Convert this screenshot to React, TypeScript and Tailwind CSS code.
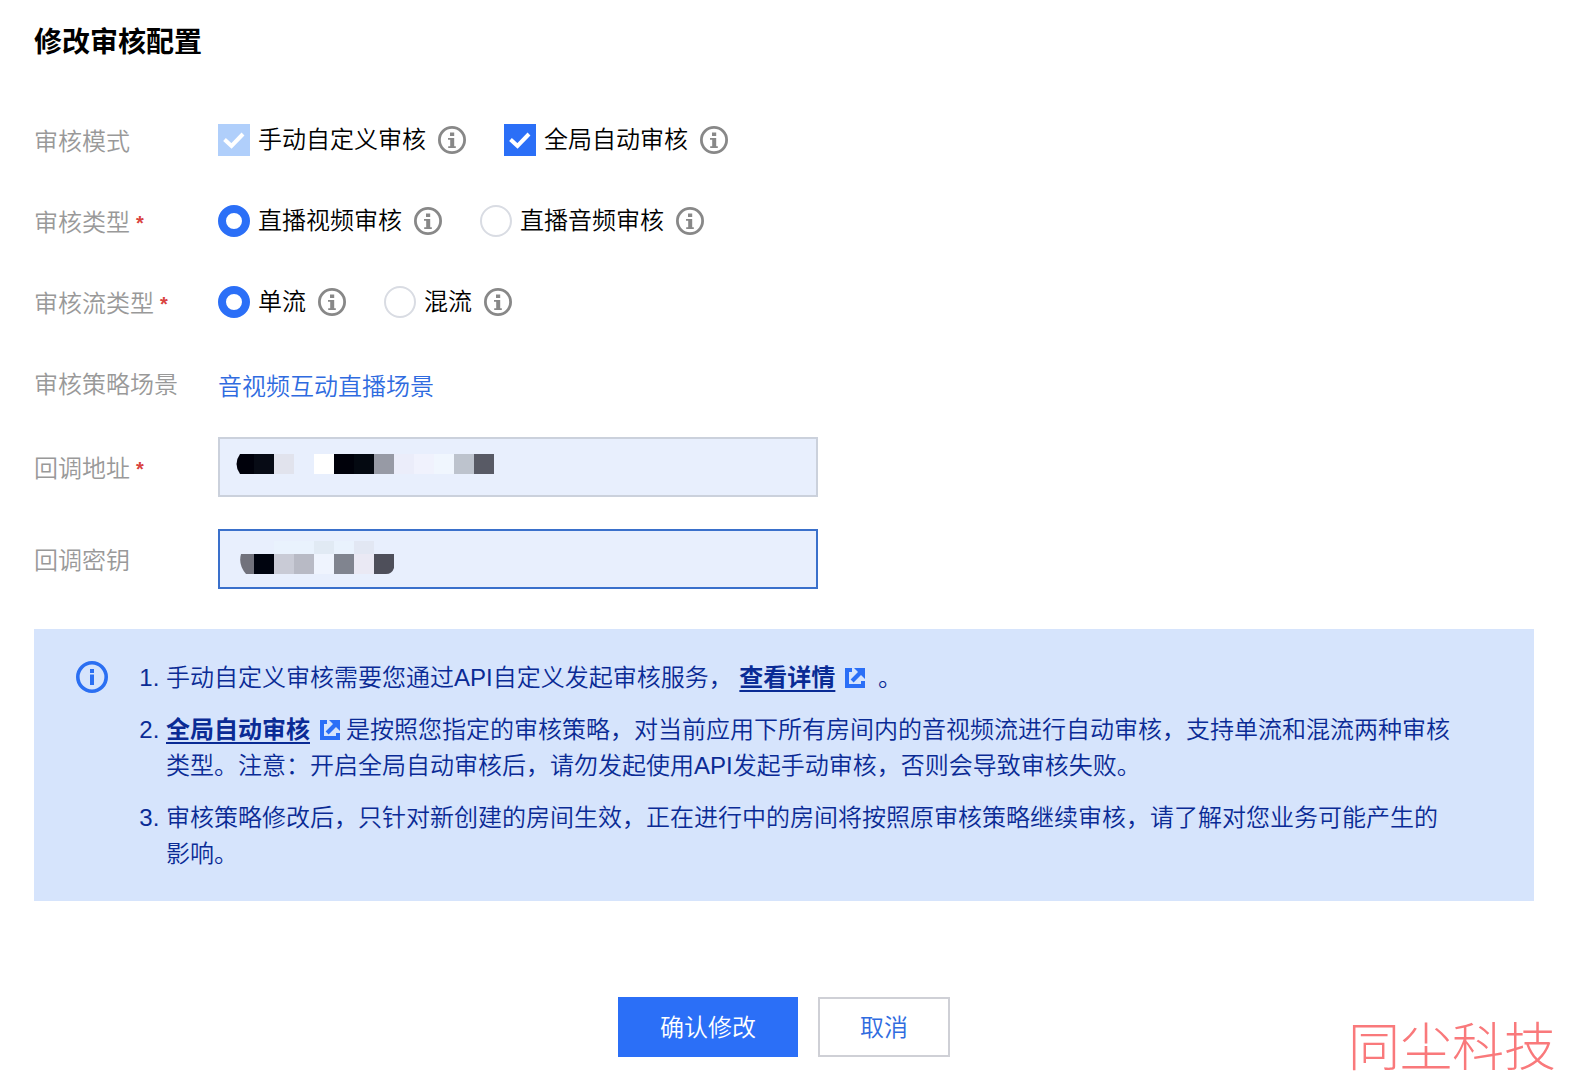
import { useState } from 'react';
import type { ReactNode } from 'react';

const InfoIcon = () => (
  <svg viewBox="0 0 28 28" className="w-7 h-7 shrink-0 text-[#888888]" aria-hidden="true">
    <circle cx="14" cy="14" r="12.6" fill="none" stroke="currentColor" strokeWidth="2.8" />
    <path d="M12 6.4h4.2v3.6H12zM10 12h6.2v8.2h1.6V22h-7.6v-1.8h2v-6.4H10z" fill="currentColor" />
  </svg>
);

const AlertIcon = () => (
  <svg viewBox="0 0 32 32" className="w-8 h-8 shrink-0 text-[#2b6ff2]" aria-hidden="true">
    <circle cx="16" cy="16" r="14.2" fill="none" stroke="currentColor" strokeWidth="3.6" />
    <path d="M14 8h4v4h-4zM14 13.4h4V24h-4z" fill="currentColor" />
  </svg>
);

const ExternalIcon = () => (
  <svg viewBox="0 0 20 20" className="inline-block w-5 h-5 ml-2.5 mr-1.5 align-[-2px] text-[#2b6ff7]" aria-hidden="true">
    <path d="M0 0h7v4H4v12h12v-3h4v7H0z" fill="currentColor" />
    <path d="M9 0h11v11l-4-4-7.4 7.4-3-3L13 4z" fill="currentColor" />
  </svg>
);

type ChoiceProps = {
  type: 'checkbox' | 'radio';
  name: string;
  label: string;
  checked: boolean;
  disabled?: boolean;
  onChange: () => void;
};

const Choice = ({ type, name, label, checked, disabled, onChange }: ChoiceProps) => (
  <div className="flex items-center gap-3">
    <label className="flex items-center gap-2">
      <span className="relative flex">
        <input
          type={type}
          name={name}
          checked={checked}
          disabled={disabled}
          onChange={onChange}
          className={
            type === 'checkbox'
              ? 'appearance-none w-8 h-8 border-2 border-[#cfd5de] checked:border-[#2b6ff7] checked:bg-[#2b6ff7] disabled:border-[#b0cffb] disabled:bg-[#b0cffb]'
              : 'appearance-none w-8 h-8 rounded-full border-2 border-[#d9dce3] checked:border-8 checked:border-[#2b6ff7]'
          }
        />
        {type === 'checkbox' && checked && (
          <svg viewBox="0 0 32 32" className="absolute inset-0 pointer-events-none" aria-hidden="true">
            <path d="M6.5 15.5l7 6.5L25 10" fill="none" stroke="#fff" strokeWidth="4" />
          </svg>
        )}
      </span>
      {label}
    </label>
    <InfoIcon />
  </div>
);

type RowProps = {
  label: string;
  required?: boolean;
  htmlFor?: string;
  alignTop?: boolean;
  children: ReactNode;
};

const Row = ({ label, required, htmlFor, alignTop, children }: RowProps) => {
  const Tag = htmlFor ? 'label' : 'span';
  return (
    <div className={alignTop ? 'flex items-start' : 'flex items-center'}>
      <Tag htmlFor={htmlFor} className="flex w-46 shrink-0 gap-1.5 pt-1 text-[#999999]">
        {label}
        {required && <span className="text-xl/8 font-bold text-[#d9443f]">*</span>}
      </Tag>
      {children}
    </div>
  );
};

const inputClass =
  'w-full h-15 px-4 border-2 border-[#cbd1dc] bg-[#e8effd] outline-none focus:border-[#3a70cb]';

const App = () => {
  const [auto, setAuto] = useState(true);
  const [media, setMedia] = useState('video');
  const [stream, setStream] = useState('single');

  return (
    <main className="relative min-h-screen bg-white pl-[34px] pr-10 pt-[22px] pb-7 text-2xl/8 font-[350] text-black font-['Liberation_Sans','Noto_Sans_CJK_SC',sans-serif]">
      <h1 className="text-[28px]/[42px] font-bold">修改审核配置</h1>

      <form className="mt-[58px]" onSubmit={(e) => e.preventDefault()}>
        <div className="flex flex-col gap-[45px]">
          <Row label="审核模式">
            <div className="flex gap-[38px]">
              <Choice type="checkbox" name="manual" label="手动自定义审核" checked disabled onChange={() => {}} />
              <Choice type="checkbox" name="auto" label="全局自动审核" checked={auto} onChange={() => setAuto(!auto)} />
            </div>
          </Row>
          <Row label="审核类型" required>
            <div className="flex gap-[38px]">
              <Choice type="radio" name="media" label="直播视频审核" checked={media === 'video'} onChange={() => setMedia('video')} />
              <Choice type="radio" name="media" label="直播音频审核" checked={media === 'audio'} onChange={() => setMedia('audio')} />
            </div>
          </Row>
          <Row label="审核流类型" required>
            <div className="flex gap-[38px]">
              <Choice type="radio" name="stream" label="单流" checked={stream === 'single'} onChange={() => setStream('single')} />
              <Choice type="radio" name="stream" label="混流" checked={stream === 'mixed'} onChange={() => setStream('mixed')} />
            </div>
          </Row>
          <Row label="审核策略场景" alignTop>
            <a href="#scene" className="pt-1.5 text-[#2f6be0]">音视频互动直播场景</a>
          </Row>
        </div>

        <div className="mt-[34px] flex flex-col gap-8">
          <Row label="回调地址" required htmlFor="callback-url">
            <div className="relative flex w-full max-w-150">
              <input id="callback-url" type="text" className={inputClass} />
              {/* masked value */}
              <svg viewBox="0 0 258 20" className="absolute left-[18px] top-[17px] w-[258px] h-5 pointer-events-none" aria-hidden="true">
                <path d="M4 0h14v20H4Q-3 10 4 0z" fill="#00010b" />
                <path d="M18 0h20v20H18z" fill="#070b15" />
                <path d="M38 0h20v20H38z" fill="#e1e3ed" />
                <path d="M78 0h20v20H78z" fill="#ffffff" />
                <path d="M98 0h20v20H98z" fill="#00010a" />
                <path d="M118 0h20v20h-20z" fill="#040911" />
                <path d="M138 0h20v20h-20z" fill="#979aa5" />
                <path d="M158 0h20v20h-20z" fill="#ebedfa" />
                <path d="M178 0h20v20h-20z" fill="#f0f2fd" />
                <path d="M198 0h20v20h-20z" fill="#f0f6fe" />
                <path d="M218 0h20v20h-20z" fill="#bdc3cd" />
                <path d="M238 0h20v20h-20z" fill="#585a65" />
              </svg>
            </div>
          </Row>
          <Row label="回调密钥" htmlFor="callback-key">
            <div className="relative flex w-full max-w-150">
              <input id="callback-key" type="text" autoFocus className={inputClass} />
              <svg viewBox="0 0 154 34" className="absolute left-[22px] top-[11px] w-[154px] h-[34px] pointer-events-none" aria-hidden="true">
                <path d="M34 1h40v13H34zM94 1h20v13H94z" fill="#e9f2fd" />
                <path d="M74 1h20v13H74z" fill="#e1eaf4" />
                <path d="M114 1h20v13h-20z" fill="#e2e7f3" />
                <path d="M1 14h13v20H6Q-2 25 1 14z" fill="#71727c" />
                <path d="M14 14h20v20H14z" fill="#00040f" />
                <path d="M34 14h20v20H34z" fill="#c9cbd6" />
                <path d="M54 14h20v20H54z" fill="#b8bac5" />
                <path d="M74 14h20v20H74z" fill="#eff4fe" />
                <path d="M94 14h20v20H94z" fill="#80848f" />
                <path d="M114 14h20v20h-20z" fill="#eae9f4" />
                <path d="M134 14h20v14q-2 6-8 6h-12z" fill="#4e4f5a" />
              </svg>
            </div>
          </Row>
        </div>

        <section className="mt-10 flex items-start gap-[58px] bg-[#d6e4fc] pl-[42px] pr-20 pt-[31px] pb-[29px] text-[#0a2b95] leading-9">
          <div className="pt-px">
            <AlertIcon />
          </div>
          <ol className="flex flex-1 flex-col gap-4 list-decimal">
            <li>
              手动自定义审核需要您通过API自定义发起审核服务，{' '}
              <a href="#detail" className="font-bold underline decoration-2 underline-offset-4">查看详情</a>
              <ExternalIcon /> 。
            </li>
            <li>
              <a href="#auto" className="font-bold underline decoration-2 underline-offset-4">全局自动审核</a>
              <ExternalIcon />
              是按照您指定的审核策略，对当前应用下所有房间内的音视频流进行自动审核，支持单流和混流两种审核类型。注意：开启全局自动审核后，请勿发起使用API发起手动审核，否则会导致审核失败。
            </li>
            <li>
              审核策略修改后，只针对新创建的房间生效，正在进行中的房间将按照原审核策略继续审核，请了解对您业务可能产生的影响。
            </li>
          </ol>
        </section>

        <div className="mt-24 flex justify-center gap-5">
          <button type="submit" className="h-15 px-[42px] pt-0.5 bg-[#2b6ff7] text-white">确认修改</button>
          <button type="button" className="h-15 px-10 pt-0.5 border-2 border-[#cfd0d6] bg-white text-[#2f6be0]">取消</button>
        </div>
      </form>

      <div className="absolute right-[18px] bottom-2 text-[52px]/[60px] font-light text-[#f9797b] pointer-events-none">同尘科技</div>
    </main>
  );
};

export default App;
